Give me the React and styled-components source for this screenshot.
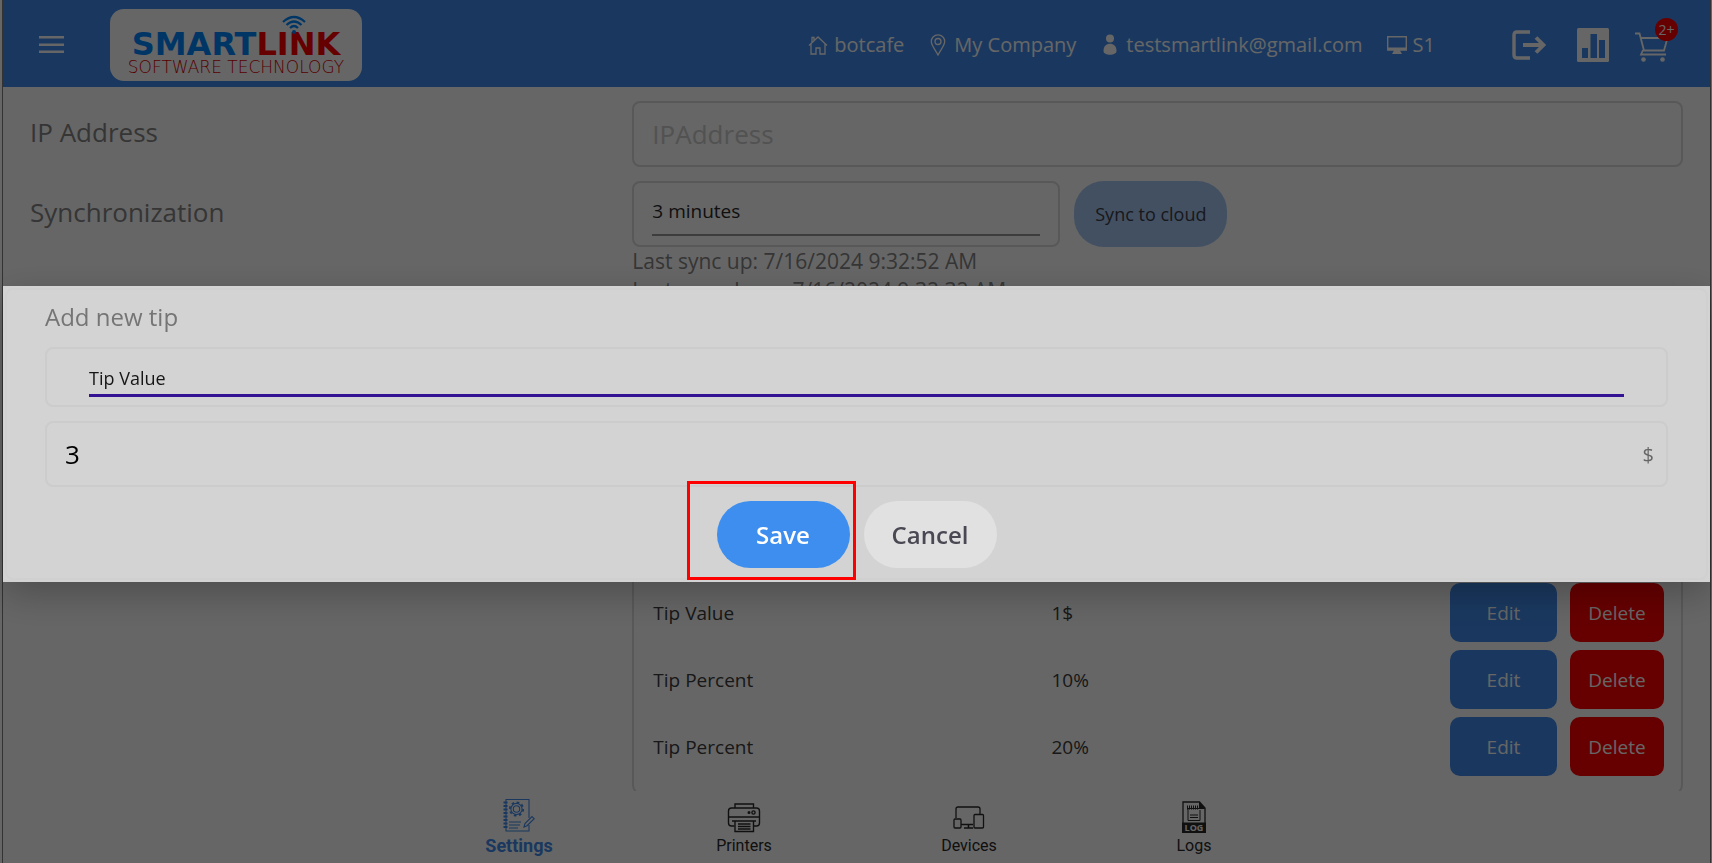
import React, { useState } from 'react'
import styled, { createGlobalStyle } from 'styled-components'

const GlobalStyle = createGlobalStyle`
  :root {
    --blue: #418cee;
    --red: #ff0000;
    --white: #ffffff;
    --line: #dddddd;
    --grey: #868686;
    --ink: #2a2a2a;
  }

  * {
    box-sizing: border-box;
  }

  body {
    margin: 0;
    background: var(--white);
    font-family: "Open Sans", sans-serif;
  }

  button, input, select {
    font-family: inherit;
  }
`

const Page = styled.div`
  display: flex;
  flex-direction: column;
  height: 100vh;
  margin-left: 2px;
  margin-right: 1px;
  border: solid #808080;
  border-width: 0 1px;
  overflow: hidden;
`

const Header = styled.header`
  display: flex;
  align-items: center;
  flex: none;
  height: 87px;
  padding: 3px 41px 0 36px;
  background: var(--blue);
  color: var(--white);
`

const IconButton = styled.button`
  position: relative;
  display: flex;
  padding: 0;
  border: 0;
  background: none;
  color: inherit;
  cursor: pointer;
`

const Logo = styled.div`
  position: relative;
  display: flex;
  flex-direction: column;
  align-items: center;
  justify-content: flex-end;
  gap: 2px;
  width: 252px;
  height: 72px;
  margin: 0 auto 0 46px;
  padding-bottom: 5px;
  border-radius: 14px;
  background: var(--white);
  white-space: nowrap;

  svg {
    position: absolute;
    top: 6px;
    right: 56px;
  }
`

const LogoName = styled.div`
  font: bold 32px/26px "DejaVu Sans", sans-serif;
  color: ${(props) => (props.$red ? 'var(--red)' : '#0087ff')};
`

const LogoRow = styled.div`
  display: flex;
`

const LogoTagline = styled.div`
  font: 200 17px/17px "DejaVu Sans", sans-serif;
  color: #d80000;
`

const Info = styled.div`
  display: flex;
  gap: 24px;
  margin-right: 77px;
`

const InfoItem = styled.div`
  display: flex;
  align-items: center;
  gap: 6px;
  font-size: 20px;
  line-height: 28px;
`

const HeaderActions = styled.div`
  display: flex;
  align-items: center;
  gap: 26px;
`

const Badge = styled.span`
  position: absolute;
  top: -10px;
  right: -9px;
  width: 23px;
  height: 23px;
  border-radius: 50%;
  background: var(--red);
  font-size: 14px;
  line-height: 23px;
  text-align: center;
`

const Main = styled.main`
  display: flex;
  flex-direction: column;
  flex: 1;
  min-height: 0;
  padding: 14px 27px 0;
  overflow: hidden;
`

const FormRow = styled.div`
  display: grid;
  grid-template-columns: 4fr 7fr;
  column-gap: 2px;
  flex: ${(props) => (props.$fill ? '1' : 'none')};
  min-height: 0;
  margin-bottom: ${(props) => (props.$fill ? '-4px' : '14px')};
`

const Label = styled.label`
  font-size: 26px;
  line-height: 62px;
  color: var(--grey);
`

const Field = styled.div`
  display: flex;
  align-items: center;
  flex: ${(props) => props.$width || 'auto'};
  height: 66px;
  padding: 0 18px;
  border: 2px solid var(--line);
  border-radius: 8px;
`

const TextInput = styled.input`
  width: 100%;
  min-width: 0;
  padding: 0;
  border: 0;
  outline: 0;
  background: none;
  font-size: 26px;
  line-height: 36px;
  color: #000000;

  &::placeholder {
    color: #cccccc;
    opacity: 1;
  }
`

const Select = styled.select`
  appearance: none;
  width: 100%;
  height: ${(props) => (props.$accent ? '40px' : '44px')};
  padding: ${(props) => (props.$accent ? '4px 0 0' : '0 0 4px')};
  border: 0;
  border-bottom: ${(props) => (props.$accent ? '3px solid #341294' : '2px solid #999999')};
  border-radius: 0;
  outline: 0;
  background: none;
  font-size: ${(props) => (props.$accent ? '18px' : '19px')};
  color: ${(props) => (props.$accent ? '#161616' : 'var(--ink)')};
`

const SyncLine = styled.div`
  display: flex;
  gap: 14px;
`

const SyncButton = styled.button`
  flex: none;
  width: 153px;
  height: 66px;
  padding: 0;
  border: 0;
  border-radius: 30px;
  background: #a8c8f5;
  font-size: 18px;
  color: #3c3c46;
`

const SyncTime = styled.div`
  font-size: 21px;
  line-height: 29px;
  color: var(--grey);
`

const TipBox = styled.div`
  display: flex;
  align-items: flex-end;
  grid-column: 2;
  padding: 0 17px 13px 19px;
  border: 2px solid var(--line);
  border-radius: 10px;
`

const TipTable = styled.table`
  width: 100%;
  border-collapse: collapse;
  font-size: 19px;
  color: #3c3c3c;

  td {
    padding: 4px 0;
  }

  td:first-child {
    width: 39%;
  }

  td:nth-child(2) {
    padding-left: 4px;
  }
`

const RowActions = styled.div`
  display: flex;
  justify-content: flex-end;
  gap: 13px;
`

const RowButton = styled.button`
  width: ${(props) => (props.$danger ? '94px' : '107px')};
  height: 59px;
  padding: 0;
  border: 0;
  border-radius: 10px;
  background: ${(props) => (props.$danger ? 'var(--red)' : 'var(--blue)')};
  font-size: 19px;
  color: var(--white);
`

const TabBar = styled.nav`
  display: flex;
  justify-content: center;
  flex: none;
  height: 72px;
`

const Tab = styled.a`
  display: flex;
  flex-direction: column;
  align-items: center;
  width: 225px;
  padding-top: 6px;
  font-family: Roboto, sans-serif;
  font-size: ${(props) => (props.$active ? '18px' : '16px')};
  font-weight: ${(props) => (props.$active ? 700 : 400)};
  line-height: 26px;
  color: ${(props) => (props.$active ? 'var(--blue)' : 'var(--ink)')};
  text-decoration: none;

  svg {
    flex: none;
  }
`

const Backdrop = styled.div`
  position: fixed;
  inset: 0;
  display: flex;
  align-items: center;
  padding: 5px 2px 0 3px;
  background: rgba(0, 0, 0, 0.6);
`

const Dialog = styled.form`
  flex: 1;
  padding: 2px;
  background: #d3d3d3;
  box-shadow: 0 12px 36px rgba(0, 0, 0, 0.25);
`

const DialogCard = styled.div`
  display: flex;
  flex-direction: column;
  gap: 14px;
  padding: 10px 38px;
  border: 2px solid #d0d0d0;
  border-radius: 8px;
`

const DialogTitle = styled.h2`
  margin: 0;
  font-size: 24px;
  font-weight: 400;
  line-height: 33px;
  color: #757575;
`

const DialogField = styled.div`
  display: flex;
  align-items: center;
  height: ${(props) => (props.$tall ? '66px' : '60px')};
  padding: ${(props) => (props.$tall ? '0 12px 0 18px' : '0 42px')};
  border: 2px solid #cccccc;
  border-radius: 8px;
`

const Unit = styled.span`
  font-size: 20px;
  color: #666666;
`

const DialogActions = styled.div`
  display: flex;
  justify-content: center;
  gap: 14px;
`

const DialogButton = styled.button`
  width: 133px;
  height: 67px;
  padding: 0;
  border: 0;
  border-radius: 34px;
  background: ${(props) => (props.$primary ? '#3d8eee' : '#e1e1e1')};
  font-size: 24px;
  font-weight: 600;
  color: ${(props) => (props.$primary ? 'var(--white)' : '#4a4852')};
`

const SaveWrap = styled.div`
  position: relative;
`

// red frame over the save button
const Highlight = styled.div`
  position: absolute;
  inset: -20px -6px -12px -30px;
  border: 3px solid var(--red);
  pointer-events: none;
`

const MenuIcon = () => (
  <svg width="25" height="18" viewBox="0 0 25 18" fill="currentColor">
    <path d="M0 0h25v2.500H0zM0 7.500h25V10H0zM0 14.500h25V17H0z" />
  </svg>
)

const WifiIcon = () => (
  <svg width="24" height="20" viewBox="0 0 24 20" fill="none" stroke="#0087ff" strokeWidth="2.2">
    <path d="M1 7Q12-3 23 7M4.500 10Q12 3 19.500 10M8 13Q12 9 16 13" />
    <circle cx="12" cy="17" r="2" fill="#0087ff" stroke="none" />
  </svg>
)

const HomeIcon = () => (
  <svg width="20" height="20" viewBox="0 0 20 20" fill="none" stroke="currentColor" strokeWidth="1.3">
    <path d="M1 10.500 10 2l9 8.500M3 9v10h5v-6h4v6h5V9M4 7V2.500h2V5" />
  </svg>
)

const PinIcon = () => (
  <svg width="20" height="22" viewBox="0 0 20 22" fill="none" stroke="currentColor" strokeWidth="1.3">
    <path d="M10 21C7 15 3.300 11.500 3.300 7.500a6.700 6.700 0 0 1 13.400 0C16.700 11.500 13 15 10 21z" />
    <circle cx="10" cy="7.500" r="3" />
  </svg>
)

const UserIcon = () => (
  <svg width="20" height="22" viewBox="0 0 20 22" fill="currentColor">
    <circle cx="10" cy="4.500" r="4" />
    <path d="M3.500 17c0-5 3-7.300 6.500-7.300s6.500 2.300 6.500 7.300c0 5-13 5-13 0z" />
  </svg>
)

const ScreenIcon = () => (
  <svg width="20" height="20" viewBox="0 0 20 20">
    <path d="M.7 1.700h18.600v13H.7z" fill="none" stroke="currentColor" strokeWidth="1.400" />
    <path d="M0 12.500h20V15.500H13l2 3.500H5l2-3.500H0z" fill="currentColor" />
  </svg>
)

const LogoutIcon = () => (
  <svg width="39" height="32" viewBox="0 0 39 32" fill="none" stroke="currentColor" strokeWidth="3.800">
    <path d="M18 3H5Q2 3 2 6v20q0 3 3 3h13" strokeWidth="3.400" />
    <path d="M11 16h20M24 8.500l7.500 7.500-7.500 7.500" />
  </svg>
)

const ChartIcon = () => (
  <svg width="32" height="34" viewBox="0 0 32 34">
    <rect width="32" height="34" rx="1.500" fill="currentColor" />
    <path d="M5 20h6v10H5zM13.500 6h6.500v24h-6.500zM22 12h6v18h-6z" fill="var(--blue)" />
  </svg>
)

const CartIcon = () => (
  <svg width="34" height="34" viewBox="0 -4 34 34" fill="none" stroke="currentColor" strokeWidth="1.800">
    <path d="M0 1.500h4.500L9 18.500h20L32.500 6H6M8 18l-2 4.500h25" />
    <circle cx="8.500" cy="27.500" r="2.300" fill="currentColor" stroke="none" />
    <circle cx="27.500" cy="27.500" r="2.300" fill="currentColor" stroke="none" />
  </svg>
)

const SettingsIcon = () => (
  <svg width="36" height="36" viewBox="0 0 36 36" fill="none" stroke="currentColor" strokeWidth="1.100">
    <path d="M28 21V2.500H5V34h23v-6M8 25h12M8 28h11M8 31h9" />
    <path d="M2.500 5.500h4M2.500 9h4M2.500 12.500h4M2.500 16h4M2.500 19.500h4M2.500 23h4M2.500 26.500h4M2.500 30h4" strokeWidth="1.800" />
    <circle cx="15.500" cy="12" r="5.600" />
    <circle cx="15.500" cy="12" r="3.200" />
    <circle cx="15.500" cy="12" r="6.700" strokeWidth="1.800" strokeDasharray="2.630 2.630" />
    <path d="m23 30 1-3.500 7-7 2.200 2.200-7.200 7z" />
  </svg>
)

const PrinterIcon = () => (
  <svg width="34" height="36" viewBox="0 0 34 36" fill="none" stroke="currentColor" strokeWidth="1.400">
    <path d="M8 11V7h18.500v4M7.500 29H4.500q-3 0-3-3V14q0-3 3-3h25q3 0 3 3v12q0 3-3 3h-3M1.500 20h31M5 24h24" />
    <path d="M8 24v10.500h18.500V24M11 27h12.500M11 29.500h12.500M11 32h12.500" />
    <circle cx="26.500" cy="15.500" r="1.600" />
    <circle cx="22" cy="15.500" r=".8" />
  </svg>
)

const DevicesIcon = () => (
  <svg width="32" height="36" viewBox="0 0 32 36" fill="none" stroke="currentColor" strokeWidth="1.300">
    <path d="M3 21V12q0-2 2-2h20q2 0 2 2v5" />
    <path d="M8 27.500h12M11 31h9M15.500 28v3" strokeWidth="1.600" />
    <rect x="1" y="22" width="7" height="9" rx="1" />
    <rect x="21" y="17.500" width="9.500" height="13.500" rx="1" />
  </svg>
)

const LogIcon = () => (
  <svg width="24" height="36" viewBox="0 0 24 36">
    <path d="M1 34V5h16.500L23 11v23z" fill="none" stroke="currentColor" strokeWidth="1.300" />
    <path d="M17 4.500V12h6.500zM0 25.500h24V36H0z" fill="currentColor" />
    <path d="M5.500 11.500h12M5.500 8.500v4M7.500 8.500v4M9.500 8.500v4M11.500 8.500v4M13.500 8.500v4M15.500 8.500v4" stroke="currentColor" />
    <path d="M6 12v11.500h12V13M8 18h8M8 20.500h8" fill="none" stroke="currentColor" />
    <text x="12" y="34" textAnchor="middle" fontFamily="Open Sans" fontSize="9" fontWeight="700" fill="#ffffff">LOG</text>
  </svg>
)

const info = [
  { icon: <HomeIcon />, text: 'botcafe' },
  { icon: <PinIcon />, text: 'My Company' },
  { icon: <UserIcon />, text: 'testsmartlink@gmail.com' },
  { icon: <ScreenIcon />, text: 'S1' },
]

const tips = [
  { id: 1, type: 'Tip Value', amount: '1$' },
  { id: 2, type: 'Tip Percent', amount: '10%' },
  { id: 3, type: 'Tip Percent', amount: '20%' },
]

const tabs = [
  { name: 'Settings', icon: <SettingsIcon /> },
  { name: 'Printers', icon: <PrinterIcon /> },
  { name: 'Devices', icon: <DevicesIcon /> },
  { name: 'Logs', icon: <LogIcon /> },
]

const AddTipDialog = (props) => {
  const [amount, setAmount] = useState('3')

  const handleSubmit = (e) => {
    e.preventDefault()
    props.onClose()
  }

  return (
    <Backdrop>
      <Dialog role='dialog' aria-labelledby='tip-title' onSubmit={handleSubmit}>
        <DialogCard>
          <DialogTitle id='tip-title'>Add new tip</DialogTitle>
          <DialogField>
            <Select $accent aria-label='Tip type'>
              <option>Tip Value</option>
              <option>Tip Percent</option>
            </Select>
          </DialogField>
          <DialogField $tall>
            <TextInput aria-label='Amount' value={amount} onChange={(e) => setAmount(e.target.value)} />
            <Unit>$</Unit>
          </DialogField>
          <DialogActions>
            <SaveWrap>
              <DialogButton $primary type='submit'>Save</DialogButton>
              <Highlight />
            </SaveWrap>
            <DialogButton type='button' onClick={props.onClose}>Cancel</DialogButton>
          </DialogActions>
        </DialogCard>
      </Dialog>
    </Backdrop>
  )
}

const App = () => {
  const [open, setOpen] = useState(true)

  return (
    <>
      <GlobalStyle />
      <Page>
        <Header>
          <IconButton aria-label='Menu'><MenuIcon /></IconButton>
          <Logo>
            <WifiIcon />
            <LogoRow>
              <LogoName>SMART</LogoName>
              <LogoName $red>LINK</LogoName>
            </LogoRow>
            <LogoTagline>SOFTWARE TECHNOLOGY</LogoTagline>
          </Logo>
          <Info>
            {info.map((item) => (
              <InfoItem key={item.text}>{item.icon}<span>{item.text}</span></InfoItem>
            ))}
          </Info>
          <HeaderActions>
            <IconButton aria-label='Log out'><LogoutIcon /></IconButton>
            <IconButton aria-label='Reports'><ChartIcon /></IconButton>
            <IconButton aria-label='Cart'><CartIcon /><Badge>2+</Badge></IconButton>
          </HeaderActions>
        </Header>

        <Main>
          <FormRow>
            <Label htmlFor='ip'>IP Address</Label>
            <Field><TextInput id='ip' placeholder='IPAddress' /></Field>
          </FormRow>
          <FormRow>
            <Label htmlFor='sync'>Synchronization</Label>
            <div>
              <SyncLine>
                <Field $width='0 1 428px'>
                  <Select id='sync'>
                    <option>3 minutes</option>
                  </Select>
                </Field>
                <SyncButton>Sync to cloud</SyncButton>
              </SyncLine>
              <SyncTime>Last sync up: 7/16/2024 9:32:52 AM</SyncTime>
              <SyncTime>Last sync down: 7/16/2024 9:32:32 AM</SyncTime>
            </div>
          </FormRow>
          <FormRow $fill>
            <TipBox>
              <TipTable>
                <tbody>
                  {tips.map((tip) => (
                    <tr key={tip.id}>
                      <td>{tip.type}</td>
                      <td>{tip.amount}</td>
                      <td>
                        <RowActions>
                          <RowButton onClick={() => setOpen(true)}>Edit</RowButton>
                          <RowButton $danger>Delete</RowButton>
                        </RowActions>
                      </td>
                    </tr>
                  ))}
                </tbody>
              </TipTable>
            </TipBox>
          </FormRow>
        </Main>

        <TabBar>
          {tabs.map((tab, i) => (
            <Tab key={tab.name} href='#' $active={i === 0}>
              {tab.icon}
              {tab.name}
            </Tab>
          ))}
        </TabBar>
      </Page>
      {open && <AddTipDialog onClose={() => setOpen(false)} />}
    </>
  )
}

export default App
